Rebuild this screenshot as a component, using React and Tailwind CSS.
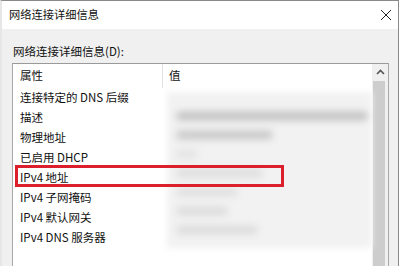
const rows = [
  { name: "连接特定的 DNS 后缀", bars: [] },
  { name: "描述", bars: [{ w: "w-[190px]", c: "bg-[#bdbdbd]" }] },
  { name: "物理地址", bars: [{ w: "w-[95px]", c: "bg-[#c4c4c4]" }] },
  { name: "已启用 DHCP", bars: [{ w: "w-[20px]", c: "bg-[#e2e2e2]" }] },
  { name: "IPv4 地址", bars: [{ w: "w-[85px]", c: "bg-[#dcdcdc]" }] },
  { name: "IPv4 子网掩码", bars: [{ w: "w-[60px]", c: "bg-[#dedede]" }] },
  { name: "IPv4 默认网关", bars: [{ w: "w-[50px]", c: "bg-[#dadada]" }] },
  { name: "IPv4 DNS 服务器", bars: [{ w: "w-[80px]", c: "bg-[#dadada]" }] },
];

const font = { fontFamily: '"Noto Sans CJK SC", "Microsoft YaHei", sans-serif' };

const App = () => {
  return (
    <div
      className="w-[401px] h-[266px] overflow-hidden bg-white text-[11.5px] text-[#111]"
      style={font}
    >
      {/* window */}
      <div className="w-[399px] h-full bg-[#f0f0f0] border-t border-r border-[#8a8a8a] border-l-2 border-l-[#e6e6e6] flex flex-col">
        {/* title bar */}
        <div className="h-[28px] bg-white flex items-center justify-between pl-[7px] pr-[6px] shrink-0">
          <span className="text-[11.25px] leading-none">网络连接详细信息</span>
          <svg width="12" height="12" viewBox="0 0 12 12" className="mb-[1px]">
            <path d="M1 1 L11 11 M11 1 L1 11" stroke="#222" strokeWidth="1" fill="none" />
          </svg>
        </div>

        {/* body */}
        <div className="flex-1 flex flex-col pl-[10px] pr-[9px] pt-[17px]">
          <p className="leading-none pl-[1px] mb-[5px]">网络连接详细信息(D):</p>

          {/* list box */}
          <div className="flex-1 flex bg-white border-t border-l border-r border-[#a8a8a8] border-t-[#9a9a9a]">
            <div className="flex-1 flex flex-col relative">
              {/* header */}
              <div className="h-[24px] flex items-center shrink-0">
                <div className="w-[150px] pl-[7px] h-full flex items-center border-r border-[#e3e3e3]">属性</div>
                <div className="pl-[6px]">值</div>
              </div>

              {/* rows */}
              <div className="flex">
                <div className="w-[150px] flex flex-col">
                  {rows.map((row, idx) => (
                    <div key={idx} className="h-[20px] flex items-center pl-[7px] whitespace-nowrap">
                      {row.name}
                    </div>
                  ))}
                </div>
                {/* blurred values */}
                <div className="flex-1 flex flex-col pt-[4px] pl-[4px]">
                  <div className="flex-1 bg-[#f2f2f2] blur-[3px] flex flex-col pl-[10px] pt-[20px] gap-[11px]">
                    {rows.slice(1).map((row, idx) =>
                      row.bars.map((b, j) => (
                        <div key={idx + "-" + j} className={`h-[8px] ${b.w} ${b.c} blur-[2px]`} />
                      ))
                    )}
                  </div>
                </div>
              </div>

              {/* highlight annotation */}
              <div className="absolute left-[2px] top-[101px] w-[269px] h-[22px] border-[3px] border-[#dc1f2c]" />
            </div>

            {/* scrollbar */}
            <div className="w-[16px] flex flex-col bg-[#f0f0f0] shrink-0">
              <div className="h-[17px] flex items-center justify-center">
                <svg width="9" height="6" viewBox="0 0 9 6">
                  <path d="M1 5 L4.5 1.5 L8 5" stroke="#555" strokeWidth="1.6" fill="none" />
                </svg>
              </div>
              <div className="flex-1 ml-[1px] mr-[3px] bg-[#cdcdcd]" />
            </div>
          </div>
        </div>
      </div>
    </div>
  );
};

export default App;
